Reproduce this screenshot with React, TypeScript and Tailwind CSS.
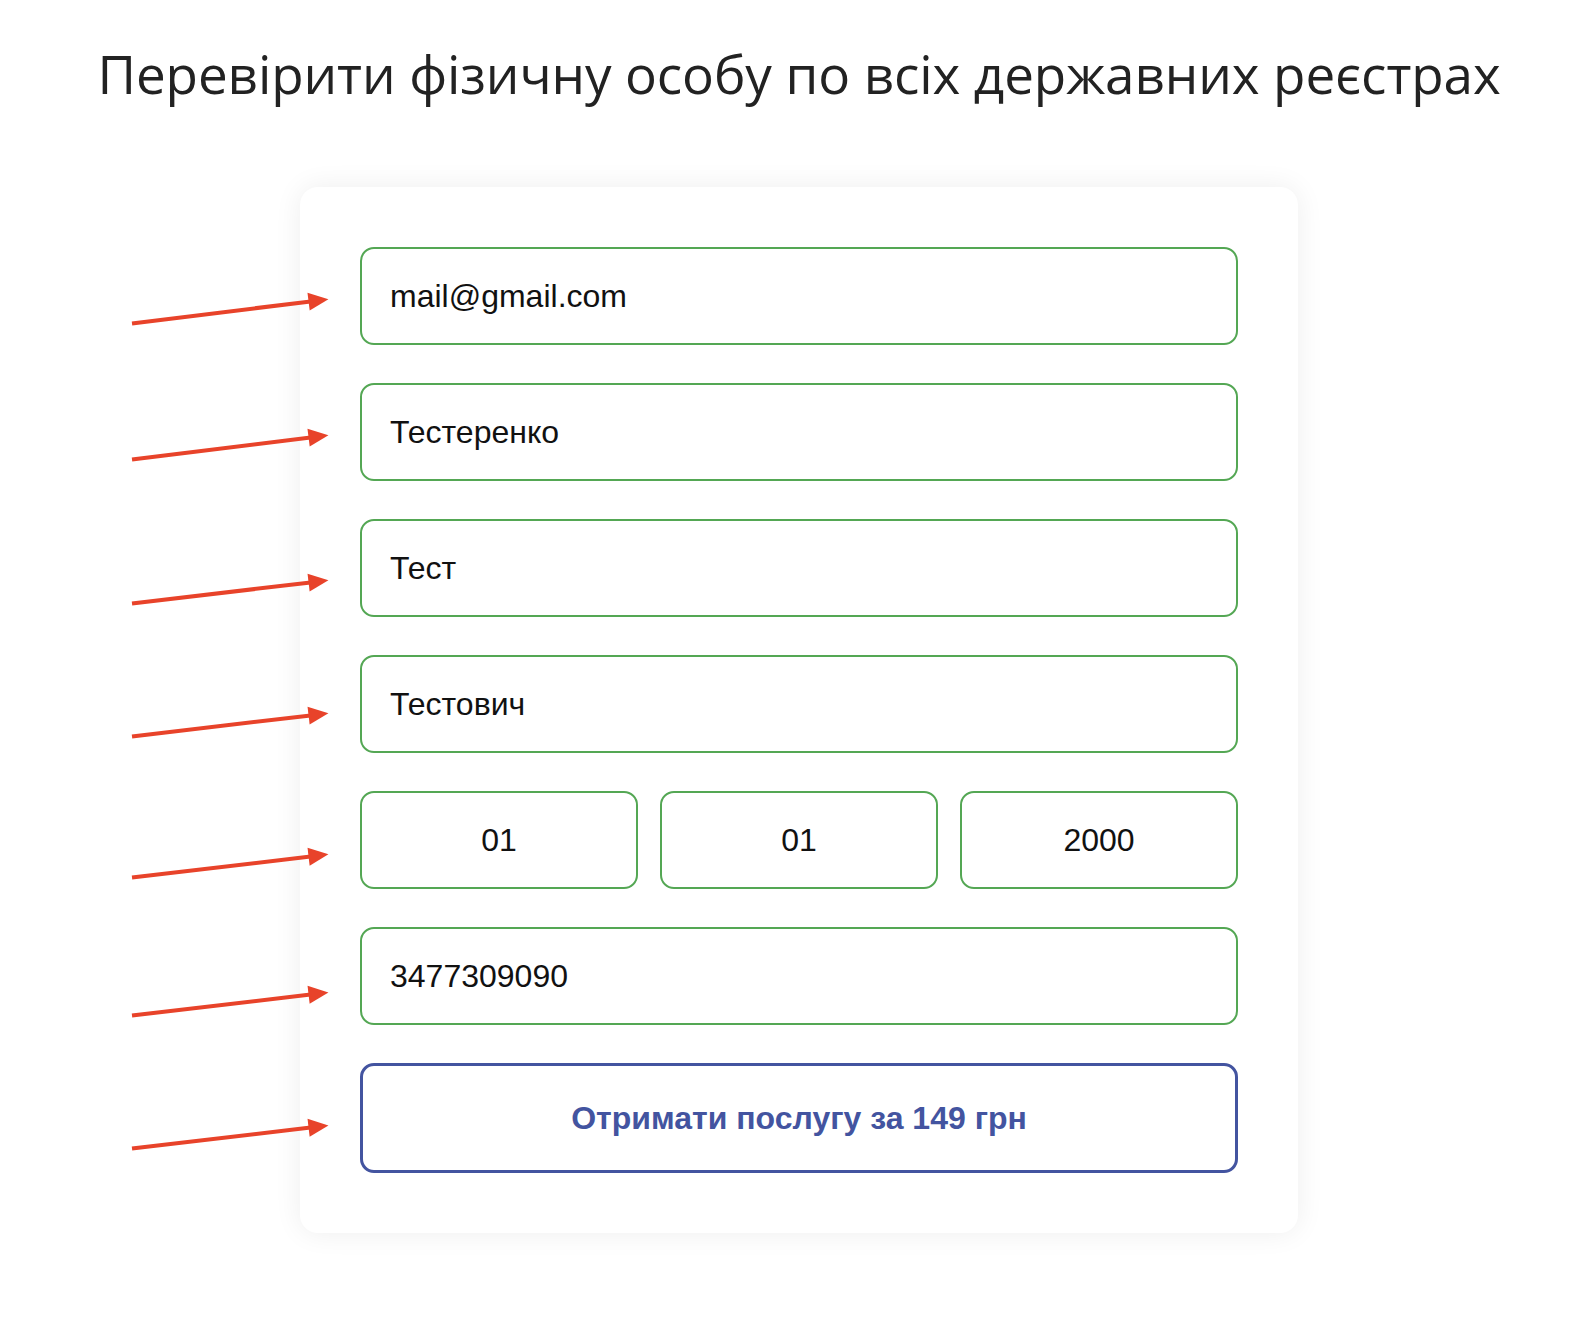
import React from "react";

const S = 1.0075;
const arrows: [number, number, number, number][] = [
  [131, 321, 326, 297],
  [131, 456, 326, 432],
  [131, 599, 326, 576],
  [131, 731, 326, 708],
  [131, 871, 326, 848],
  [131, 1008, 326, 985],
  [131, 1140, 326, 1117],
];

function Arrow({ x1, y1, x2, y2 }: { x1: number; y1: number; x2: number; y2: number }) {
  const dx = x2 - x1;
  const dy = y2 - y1;
  const len = Math.sqrt(dx * dx + dy * dy);
  const ux = dx / len;
  const uy = dy / len;
  const hl = 20;
  const hw = 9;
  const bx = x2 - ux * hl;
  const by = y2 - uy * hl;
  const px = -uy;
  const py = ux;
  return (
    <g>
      <line x1={x1} y1={y1} x2={bx + ux * 2} y2={by + uy * 2} stroke="#e8432a" strokeWidth={4} />
      <polygon
        points={`${x2},${y2} ${bx + px * hw},${by + py * hw} ${bx - px * hw},${by - py * hw}`}
        fill="#e8432a"
      />
    </g>
  );
}

const inputCls =
  "block w-full min-w-0 h-[98px] rounded-[14px] border-2 border-[#54a754] bg-white px-[28px] text-[32px] text-[#111] outline-none font-['Liberation_Sans',Arial,sans-serif]";

export default function App() {
  return (
    <div className="relative h-[1338px] w-full overflow-hidden bg-white">
      <h1 className="pt-[36px] text-center text-[53px] leading-[76px] text-[#222] font-['Open_Sans',sans-serif] tracking-[-0.1px] pl-[22px]">
        Перевірити фізичну особу по всіх державних реєстрах
      </h1>
      <div className="ml-[300px] mt-[75px] w-[998px] rounded-[18px] bg-white p-[60px] shadow-[0_0_28px_rgba(0,0,0,0.07)]">
        <div className="flex flex-col gap-[38px]">
          <input className={inputCls} defaultValue="mail@gmail.com" />
          <input className={inputCls} defaultValue="Тестеренко" />
          <input className={inputCls} defaultValue="Тест" />
          <input className={inputCls} defaultValue="Тестович" />
          <div className="grid grid-cols-3 gap-[22px]">
            <input className={inputCls + " text-center"} defaultValue="01" />
            <input className={inputCls + " text-center"} defaultValue="01" />
            <input className={inputCls + " text-center"} defaultValue="2000" />
          </div>
          <input className={inputCls} defaultValue="3477309090" />
          <button className="h-[110px] w-full rounded-[14px] border-[3px] border-[#4354a0] bg-white text-[32px] font-bold text-[#4354a0] font-['Liberation_Sans',Arial,sans-serif]">
            Отримати послугу за 149 грн
          </button>
        </div>
      </div>
      <svg className="pointer-events-none absolute left-0 top-0 block" width={1576} height={1338}>
        {arrows.map(([x1, y1, x2, y2], i) => (
          <Arrow key={i} x1={x1 * S} y1={y1 * S} x2={x2 * S} y2={y2 * S} />
        ))}
      </svg>
    </div>
  );
}
